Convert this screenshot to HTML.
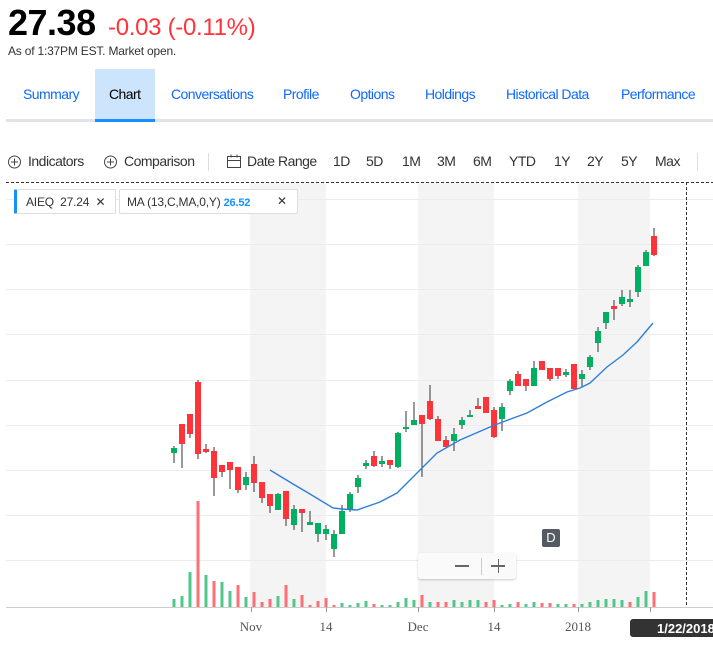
<!DOCTYPE html>
<html><head><meta charset="utf-8"><style>
*{margin:0;padding:0;box-sizing:border-box}
body{width:713px;height:645px;overflow:hidden;background:#fff;font-family:"Liberation Sans",Arial,sans-serif;position:relative}
.a{position:absolute;white-space:nowrap}
.price{left:8px;top:2px;font-size:36px;font-weight:bold;color:#000;letter-spacing:-0.5px}
.chg{left:108px;top:14px;font-size:24px;color:#ff333a;letter-spacing:-0.3px}
.asof{left:8px;top:44px;font-size:12px;color:#333;letter-spacing:-0.2px}
.tab{top:86px;font-size:14px;color:#0f69ff;letter-spacing:-0.55px}
.tool{top:153px;font-size:14px;color:#333;letter-spacing:-0.5px}
</style></head><body>
<div class="a price">27.38</div>
<div class="a chg">-0.03 (-0.11%)</div>
<div class="a asof">As of 1:37PM EST. Market open.</div>
<div class="a" style="left:95px;top:69px;width:60px;height:50px;background:#cce4fc"></div>
<div class="a" style="left:6px;top:119px;width:707px;height:3px;background:#e0e4e9"></div>
<div class="a" style="left:95px;top:119px;width:60px;height:3px;background:#188fff"></div>
<div class="a tab" style="left:23px">Summary</div>
<div class="a tab" style="left:109px;color:#000">Chart</div>
<div class="a tab" style="left:171px">Conversations</div>
<div class="a tab" style="left:283px">Profile</div>
<div class="a tab" style="left:350px">Options</div>
<div class="a tab" style="left:425px">Holdings</div>
<div class="a tab" style="left:506px">Historical Data</div>
<div class="a tab" style="left:621px">Performance</div>
<svg class="a" style="left:0;top:0" width="713" height="645">
<g fill="none" stroke="#444" stroke-width="1">
<circle cx="14.5" cy="162" r="6"/><path d="M11 162h7M14.5 158.5v7"/>
<circle cx="110.5" cy="162" r="6"/><path d="M107 162h7M110.5 158.5v7"/>
<rect x="227.5" y="156.5" width="13" height="11"/><path d="M227.5 160.5h13M231 154.5v3M237 154.5v3"/>
</g>
<path d="M208.5 153v18M697.5 153v18" stroke="#ddd"/>
</svg>
<div class="a tool" style="left:28px">Indicators</div>
<div class="a tool" style="left:124px">Comparison</div>
<div class="a tool" style="left:247px">Date Range</div>
<div class="a tool" style="left:333px">1D</div>
<div class="a tool" style="left:366px">5D</div>
<div class="a tool" style="left:402px">1M</div>
<div class="a tool" style="left:437px">3M</div>
<div class="a tool" style="left:473px">6M</div>
<div class="a tool" style="left:509px">YTD</div>
<div class="a tool" style="left:554px">1Y</div>
<div class="a tool" style="left:587px">2Y</div>
<div class="a tool" style="left:621px">5Y</div>
<div class="a tool" style="left:655px">Max</div>
<svg id="ch" class="a" style="left:0;top:0" width="713" height="645"></svg>
<div class="a" style="left:14px;top:189px;width:102px;height:25px;border:1px solid #ddd;border-left:3px solid #188fff;border-radius:2px;background:#fff;font-size:12px;color:#333;padding:5px 0 0 9px;letter-spacing:-0.2px">AIEQ&nbsp; 27.24 &nbsp;✕</div>
<div class="a" style="left:119px;top:189px;width:179px;height:25px;border:1px solid #ddd;border-radius:2px;background:#fff;font-size:12px;color:#333;padding:5px 0 0 7px;letter-spacing:-0.2px">MA (13,C,MA,0,Y) <b style="color:#188fff;font-size:11px">26.52</b><span style="position:absolute;left:157px;top:4px">✕</span></div>
<div class="a" style="left:418px;top:553px;width:98px;height:26px;background:#fafafa;border-radius:3px;box-shadow:0 1px 2px rgba(0,0,0,.2)"></div>
<div class="a" style="left:455px;top:565px;width:14px;height:2px;background:#666"></div>
<div class="a" style="left:481px;top:558px;width:1px;height:17px;background:#ccc"></div>
<div class="a" style="left:491px;top:565px;width:14px;height:1.5px;background:#666"></div>
<div class="a" style="left:497.5px;top:559px;width:1.5px;height:14px;background:#666"></div>
<div class="a" style="left:542px;top:529px;width:18px;height:18px;background:#545b63;border-radius:2px;color:#fff;font-size:13px;text-align:center;line-height:18px">D</div>
<div class="a" style="left:630px;top:619px;width:90px;height:18px;background:#333;border-radius:3px;color:#fff;font-size:13px;font-weight:bold;padding:2px 0 0 27px">1/22/2018</div>
<script>
var s='';
function R(x,y,w,h,c){s+='<rect x="'+x+'" y="'+y+'" width="'+w+'" height="'+h+'" fill="'+c+'"/>';}
[[250,326],[418,494],[578,650]].forEach(b=>R(b[0],182,b[1]-b[0],425,'#f4f4f4'));
[199,244,289,334,380,425,470,515,560].forEach(y=>R(6,y,707,1,'#ececec'));
s+='<path d="M6 182.5H713M686.5 182V607" stroke="#333" stroke-dasharray="3,2"/>';
var G='#00b061',Rd='#ff333a';
var c=[[174,448,453,446,463,G],[182,424,444,424,468,Rd],[190,414,434,414,438,Rd],[198,382,454,380,459,Rd],[206,449,452,444,453,Rd],[214,451,478,447,496,Rd],[222,465,472,465,477,Rd],[230,462,470,462,489,Rd],[238,467,490,467,493,Rd],[246,477,485,472,490,G],[254,464,483,456,492,Rd],[262,482,498,482,503,Rd],[270,494,506,494,513,Rd],[278,494,510,493,510,G],[286,491,519,491,526,Rd],[294,509,525,505,530,G],[302,509,513,509,532,Rd],[310,522,525,511,525,G],[318,523,534,523,542,G],[326,529,534,525,540,G],[334,534,549,530,557,G],[342,511,534,505,534,G],[350,494,510,492,512,G],[358,478,487,475,493,G],[366,463,466,460,469,G],[374,456,466,451,467,Rd],[382,461,464,456,467,G],[390,460,465,460,469,Rd],[398,433,467,432,468,G],[406,427,429,411,432,G],[414,420,425,402,425,G],[422,415,424,415,477,Rd],[430,401,419,385,420,Rd],[438,419,441,416,441,Rd],[446,440,447,436,447,Rd],[454,434,441,428,451,G],[462,420,425,417,429,G],[470,415,416,410,417,G],[478,406,409,398,409,Rd],[486,397,413,397,413,Rd],[494,410,437,407,438,Rd],[502,407,419,403,431,G],[510,381,391,379,395,G],[518,374,386,371,386,Rd],[526,379,386,379,391,Rd],[534,368,386,361,386,G],[542,361,370,361,370,Rd],[550,368,379,368,381,Rd],[558,368,376,368,379,Rd],[566,372,375,369,377,G],[574,364,389,364,389,Rd],[582,374,379,370,387,G],[590,357,367,355,370,G],[598,331,343,327,352,G],[606,312,323,312,329,G],[614,306,309,300,320,Rd],[622,297,304,290,306,G],[630,299,302,290,307,G],[638,267,292,265,297,G],[646,252,266,250,266,G],[654,236,255,228,256,Rd]];
c.forEach(k=>{R(k[0]-0.5,k[3],1,k[4]-k[3],'#333');R(k[0]-3,k[1],6,Math.max(2,k[2]-k[1]),k[5]);});
s+='<polyline fill="none" stroke="#2f7ed8" stroke-width="1.4" points="270,470 293,484 310,494 333,508 342,509 357,510 380,502 397,493 413,477 437,453 460,440 490,427 500,423 527,413 547,402 567,392 580,388 590,383 607,367 623,355 637,342 653,323"/>';
var v=[[174,599,1],[182,596,1],[190,572,1],[198,501,0],[206,575,1],[214,581,0],[222,582,1],[230,591,1],[238,585,0],[246,597,1],[254,592,0],[262,602,0],[270,599,0],[278,596,1],[286,585,0],[294,599,1],[302,595,0],[310,605,0],[318,601,0],[326,598,0],[334,605,0],[342,603,1],[350,605,1],[358,603,1],[366,601,1],[374,604,0],[382,605,1],[390,605,1],[398,602,1],[406,598,1],[414,600,1],[422,595,0],[430,602,1],[438,602,0],[446,602,0],[454,600,1],[462,602,1],[470,600,1],[478,600,1],[486,602,0],[494,600,0],[502,605,1],[510,604,1],[518,602,0],[526,604,1],[534,602,1],[542,603,0],[550,603,0],[558,604,1],[566,604,1],[574,604,0],[582,604,1],[590,602,1],[598,600,1],[606,599,1],[614,599,1],[622,600,1],[630,602,0],[638,597,1],[646,591,1],[654,592,0]];
v.forEach(k=>R(k[0]-1.5,k[1],3,607-k[1],k[2]?'#4fc98a':'#ff6f74'));
R(6,607,707,1,'#ccc');
[[251,'Nov'],[326,'14'],[418,'Dec'],[494,'14'],[578,'2018'],[650,'']].forEach(t=>{R(t[0],607,1,5,'#999');s+='<text x="'+t[0]+'" y="631" text-anchor="middle" font-family="Liberation Serif,serif" font-size="13" fill="#555">'+t[1]+'</text>';});
document.getElementById('ch').innerHTML=s;
</script>
</body></html>
